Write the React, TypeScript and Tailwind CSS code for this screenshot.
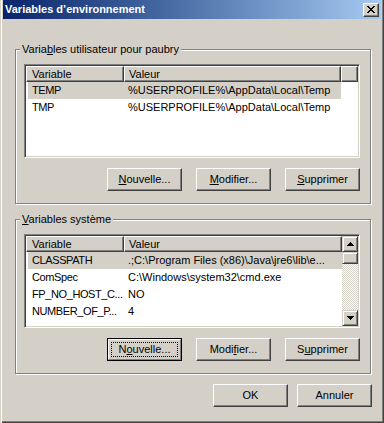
import type { ReactNode } from 'react';

type Row = { name: string; value: string; selected?: boolean };

const userVars: Row[] = [
  { name: 'TEMP', value: '%USERPROFILE%\\AppData\\Local\\Temp', selected: true },
  { name: 'TMP', value: '%USERPROFILE%\\AppData\\Local\\Temp' },
];

const systemVars: Row[] = [
  { name: 'CLASSPATH', value: '.;C:\\Program Files (x86)\\Java\\jre6\\lib\\e...', selected: true },
  { name: 'ComSpec', value: 'C:\\Windows\\system32\\cmd.exe' },
  { name: 'FP_NO_HOST_C...', value: 'NO' },
  { name: 'NUMBER_OF_P...', value: '4' },
];

function Button({ children, focused }: { children: ReactNode; focused?: boolean }) {
  if (focused) {
    return (
      <div className="w-[75px] h-[23px] border border-black bg-[#d4d0c8]">
        <div className="h-full border border-t-white border-l-white border-r-[#808080] border-b-[#808080] flex">
          <div className="flex-1 m-[2px] border border-dotted border-black flex items-center justify-center">
            {children}
          </div>
        </div>
      </div>
    );
  }
  return (
    <div className="w-[75px] h-[23px] bg-[#d4d0c8] border border-t-white border-l-white border-r-[#404040] border-b-[#404040] shadow-[inset_-1px_-1px_0_#808080] flex items-center justify-center">
      {children}
    </div>
  );
}

function Arrow({ down }: { down?: boolean }) {
  return (
    <svg width="7" height="4" viewBox="0 0 7 4" className={down ? 'rotate-180' : ''}>
      <path d="M3 0h1v1H3z M2 1h3v1H2z M1 2h5v1H1z M0 3h7v1H0z" fill="#000" />
    </svg>
  );
}

const raised =
  'bg-[#d4d0c8] border border-t-[#d4d0c8] border-l-[#d4d0c8] border-r-[#404040] border-b-[#404040] shadow-[inset_1px_1px_0_#fff,inset_-1px_-1px_0_#808080]';

function ScrollBar() {
  return (
    <div className="w-[16px] flex flex-col bg-[image:conic-gradient(#fff_25%,#d4d0c8_0_50%,#fff_0_75%,#d4d0c8_0)] bg-[length:2px_2px]">
      <div className={`h-[16px] flex items-center justify-center ${raised}`}>
        <Arrow />
      </div>
      <div className={`h-[12px] ${raised}`} />
      <div className="flex-1" />
      <div className={`h-[16px] flex items-center justify-center ${raised}`}>
        <Arrow down />
      </div>
    </div>
  );
}

const headerCell =
  'h-[16px] bg-[#d4d0c8] border border-t-white border-l-white border-r-[#404040] border-b-[#404040] shadow-[inset_-1px_-1px_0_#808080] flex items-center';

function ListView({ rows, scroll }: { rows: Row[]; scroll?: boolean }) {
  return (
    <div className="h-[94px] bg-white border border-t-[#808080] border-l-[#808080] border-b-white border-r-white p-px shadow-[inset_1px_1px_0_#404040,inset_-1px_-1px_0_#d4d0c8] flex overflow-hidden">
      <div className="flex-1 min-w-0 flex flex-col">
        <div className="flex">
          <div className={`${headerCell} w-[98px] pl-[5px]`}>Variable</div>
          <div className={`${headerCell} pl-[4px] ${scroll ? 'flex-1' : 'w-[217px]'}`}>Valeur</div>
          {!scroll && <div className={`${headerCell} flex-1`} />}
        </div>
        {rows.map((r) => (
          <div key={r.name} className="h-[17px] flex">
            <div
              className={`ml-[2px] flex items-center whitespace-nowrap overflow-hidden ${
                scroll ? 'flex-1' : 'w-[313px]'
              } ${r.selected ? 'bg-[#d4d0c8]' : ''}`}
            >
              <div className="w-[96px] shrink-0 pl-[4px] overflow-hidden tracking-[-0.4px]">{r.name}</div>
              <div className="pl-[4px]">{r.value}</div>
            </div>
          </div>
        ))}
      </div>
      {scroll && <ScrollBar />}
    </div>
  );
}

function GroupBox({ label, children }: { label: ReactNode; children: ReactNode }) {
  return (
    <div className="relative w-[356px] h-[155px] ml-[12px] border border-[#808080] shadow-[inset_1px_1px_0_#fff,1px_1px_0_#fff] pt-[14px] pl-[8px] pr-[10px] pb-[12px] flex flex-col">
      <div className="absolute -top-[7px] left-[4px] px-[2px] bg-[#d4d0c8] leading-[13px]">{label}</div>
      {children}
    </div>
  );
}

export default function App() {
  return (
    <div className="w-[384px] h-[423px] bg-[#d4d0c8] px-[3px] flex flex-col overflow-hidden text-black text-[11px] font-['Liberation_Sans',Arial,sans-serif] shadow-[inset_1px_0_0_#d4d0c8,inset_2px_0_0_#fff,inset_-1px_-1px_0_#404040,inset_-2px_-2px_0_#808080]">
      <div className="h-[19px] flex items-center pl-[2px] pr-[2px] bg-linear-to-r from-[#0a246a] to-[#a6caf0]">
        <span className="font-bold text-white">Variables d’environnement</span>
        <div className="ml-auto w-[16px] h-[14px] bg-[#d4d0c8] border border-t-white border-l-white border-r-[#404040] border-b-[#404040] shadow-[inset_-1px_-1px_0_#808080] flex items-center justify-center">
          <svg width="8" height="7" viewBox="0 0 8 7">
            <path
              d="M0 0h2v1H0z M6 0h2v1H6z M1 1h2v1H1z M5 1h2v1H5z M2 2h4v1H2z M3 3h2v1H3z M2 4h4v1H2z M1 5h2v1H1z M5 5h2v1H5z M0 6h2v1H0z M6 6h2v1H6z"
              fill="#000"
            />
          </svg>
        </div>
      </div>

      <div className="mt-[30px]">
        <GroupBox
          label={
            <>
              Varia<u>b</u>les utilisateur pour paubry
            </>
          }
        >
          <ListView rows={userVars} />
          <div className="mt-[10px] flex justify-end gap-[14px]">
            <Button>
              <u>N</u>ouvelle...
            </Button>
            <Button>
              <u>M</u>odifier...
            </Button>
            <Button>
              <u>S</u>upprimer
            </Button>
          </div>
        </GroupBox>
      </div>

      <div className="mt-[15px]">
        <GroupBox
          label={
            <>
              <u>V</u>ariables système
            </>
          }
        >
          <ListView rows={systemVars} scroll />
          <div className="mt-[10px] flex justify-end gap-[14px]">
            <Button focused>
              <span>
                N<u>o</u>uvelle...
              </span>
            </Button>
            <Button>
              Modi<u>f</u>ier...
            </Button>
            <Button>
              S<u>u</u>pprimer
            </Button>
          </div>
        </GroupBox>
      </div>

      <div className="mt-[10px] mr-[9px] flex justify-end gap-[9px]">
        <Button>OK</Button>
        <Button>Annuler</Button>
      </div>
    </div>
  );
}
